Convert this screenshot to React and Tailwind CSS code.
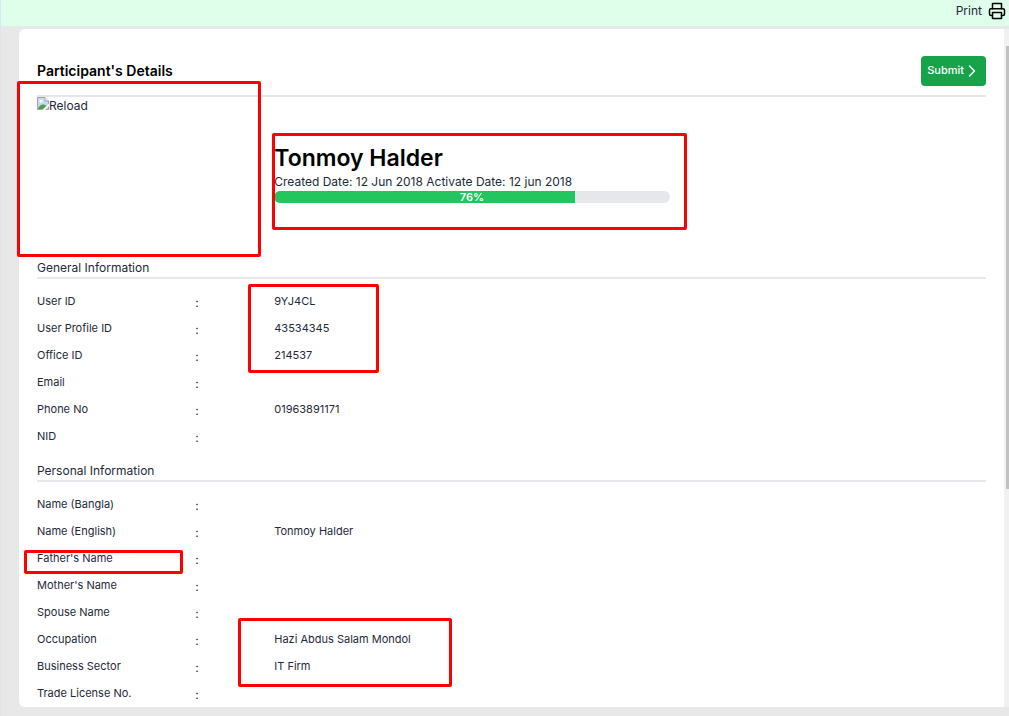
import { FiPrinter } from 'react-icons/fi'

const participant = {
  name: 'Tonmoy Halder',
  createdDate: '12 Jun 2018',
  activateDate: '12 jun 2018',
  progress: 76,
}

const generalInfo = [
  { label: 'User ID', value: '9YJ4CL' },
  { label: 'User Profile ID', value: '43534345' },
  { label: 'Office ID', value: '214537' },
  { label: 'Email', value: '' },
  { label: 'Phone No', value: '01963891171' },
  { label: 'NID', value: '' },
]

const personalInfo = [
  { label: 'Name (Bangla)', value: '' },
  { label: 'Name (English)', value: 'Tonmoy Halder' },
  { label: "Father's Name", value: '' },
  { label: "Mother's Name", value: '' },
  { label: 'Spouse Name', value: '' },
  { label: 'Occupation', value: 'Hazi Abdus Salam Mondol' },
  { label: 'Business Sector', value: 'IT Firm' },
  { label: 'Trade License No.', value: '' },
]

// Red frames drawn over the fields under review
const highlights = [
  'left-[17px] top-[81px] w-[244px] h-[176px]',
  'left-[272px] top-[133px] w-[415px] h-[97px]',
  'left-[248px] top-[284px] w-[131px] h-[89px]',
  'left-[24px] top-[550px] w-[159px] h-[24px]',
  'left-[238px] top-[618px] w-[214px] h-[69px]',
]

function MissingPhoto() {
  return (
    <div role="img" aria-label="Reload" className="flex items-start">
      <svg width="12" height="13" viewBox="0 0 12 13" className="shrink-0">
        <path d="M0.5 0.5H8L11.5 4V12.5H0.5Z" fill="#c6d8f5" stroke="#a3a3a3" />
        <path d="M8 0.5V4H11.5" fill="#ffffff" stroke="#a3a3a3" />
        <circle cx="4" cy="4" r="1.6" fill="#ffffff" />
        <path d="M1 12C2 8.5 4.5 7 7 7.5L9.5 9L6 12Z" fill="#4ba33c" />
        <path d="M5.5 13L12 6.5V9L8 13Z" fill="#ffffff" />
      </svg>
      <span className="text-[12px] leading-[18px]">Reload</span>
    </div>
  )
}

function InfoSection({ title, rows }) {
  return (
    <section>
      <h2 className="border-b-2 border-gray-200 text-[12px] leading-[18px]">{title}</h2>
      <dl className="pt-[9px]">
        {rows.map((row) => (
          <div key={row.label} className="grid h-[27px] grid-cols-12 text-[11px] leading-[26px]">
            <dt className="col-span-2">{row.label}</dt>
            <span className="text-[12px] leading-[30px]">:</span>
            <dd className="col-span-9">{row.value}</dd>
          </div>
        ))}
      </dl>
    </section>
  )
}

export default function App() {
  return (
    <div className="relative min-h-screen border-l border-[#dbe5f0] bg-[#e8e8e8] font-['Inter',sans-serif] text-gray-800">
      <header className="flex h-[26px] justify-end bg-[#e0ffeb] pr-[3px]">
        <button type="button" className="flex h-[22px] items-center gap-[6px] text-[12px]">
          Print
          <FiPrinter size={18} className="text-black" />
        </button>
      </header>

      <div className="flex pt-[3px] pb-[9px] pl-[18px]">
        <main className="flex-1 rounded-l-[6px] bg-white px-[18px]">
          <div className="flex h-[68px] items-center justify-between border-b-2 border-gray-200 pt-[17px]">
            <h1 className="text-[14px] leading-5 font-semibold text-black">Participant's Details</h1>
            <button
              type="button"
              className="flex h-[30px] items-center gap-1 rounded bg-[#16a34a] pr-[10px] pl-[6px] text-[11px] font-medium text-white"
            >
              Submit
              <svg width="8" height="14" viewBox="0 0 8 14" fill="none" stroke="currentColor" strokeWidth="1.5">
                <path d="M1.5 2L6.5 7L1.5 12" strokeLinecap="round" strokeLinejoin="round" />
              </svg>
            </button>
          </div>

          <div className="grid h-[162px] grid-cols-12">
            <div className="col-span-3">
              <MissingPhoto />
            </div>
            <div className="col-span-5 pt-[46px]">
              <h2 className="text-[23px] leading-[30px] font-semibold text-black">{participant.name}</h2>
              <p className="text-[12px] leading-[18px]">
                Created Date: {participant.createdDate} Activate Date: {participant.activateDate}
              </p>
              <div className="relative h-3 overflow-hidden rounded-full bg-gray-200">
                <div className="h-full bg-[#22c55e]" style={{ width: `${participant.progress}%` }}></div>
                <span className="absolute inset-0 text-center text-[11px] leading-3 font-semibold text-white">
                  {participant.progress}%
                </span>
              </div>
            </div>
          </div>

          <InfoSection title="General Information" rows={generalInfo} />
          <div className="h-3"></div>
          <InfoSection title="Personal Information" rows={personalInfo} />
        </main>

        {/* Scrollbar */}
        <div className="w-[5px] bg-[#f1f1f1] pt-[17px] pl-[2px]">
          <div className="h-[67%] bg-[#c1c1c1]"></div>
        </div>
      </div>

      <div className="pointer-events-none absolute inset-y-0 -left-px right-0" aria-hidden="true">
        {highlights.map((position) => (
          <div key={position} className={`absolute rounded-xs border-3 border-[#ff0000] ${position}`}></div>
        ))}
      </div>
    </div>
  )
}
